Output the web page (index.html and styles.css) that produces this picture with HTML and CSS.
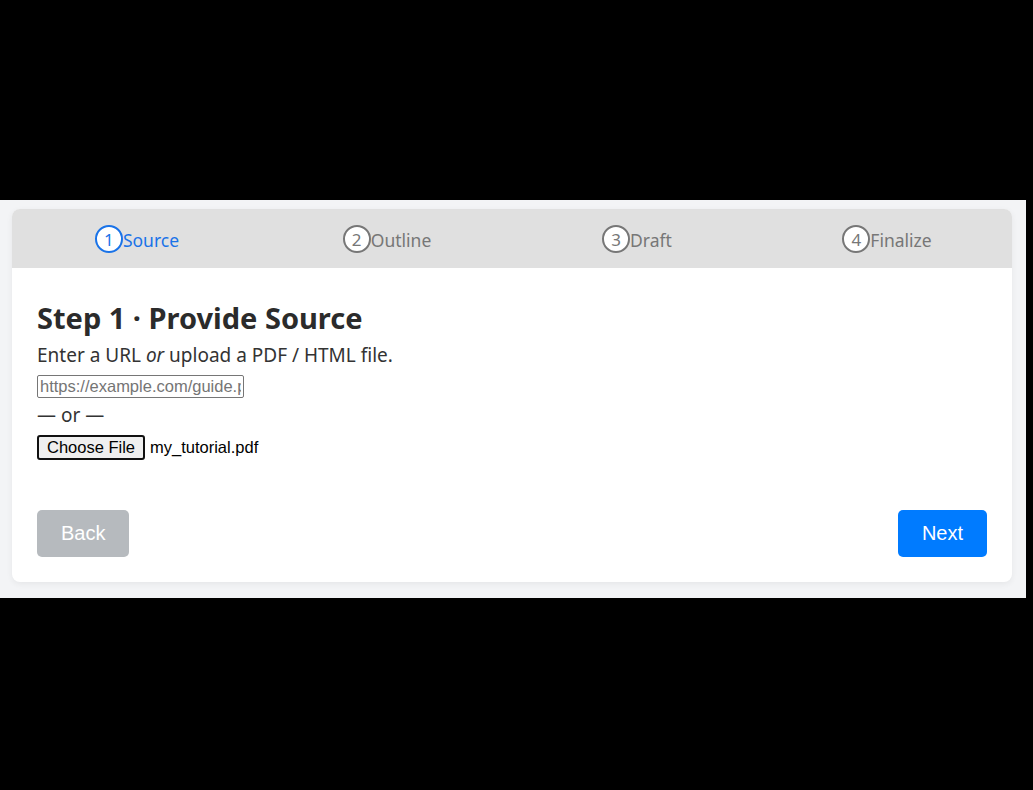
FILE: index.html
```html
<!DOCTYPE html>
<html lang="en">
<head>
<meta charset="utf-8">
<title>Wizard</title>
<link rel="stylesheet" href="styles.css">
</head>
<body>
<div class="page">
  <div class="card">
    <div class="steps">
      <div class="step active"><span class="num">1</span><span class="label">Source</span></div>
      <div class="step"><span class="num">2</span><span class="label">Outline</span></div>
      <div class="step"><span class="num">3</span><span class="label">Draft</span></div>
      <div class="step"><span class="num">4</span><span class="label">Finalize</span></div>
    </div>
    <div class="body">
      <h2 class="title">Step 1 · Provide Source</h2>
      <p class="lead">Enter a URL <em>or</em> upload a PDF / HTML file.</p>
      <input class="url" type="text" placeholder="https://example.com/guide.pdf">
      <div class="or">— or —</div>
      <div class="file-row"><button class="file-btn" type="button">Choose File</button><span class="file-name">my_tutorial.pdf</span></div>
      <div class="actions">
        <button class="btn btn-back" type="button">Back</button>
        <button class="btn btn-next" type="button">Next</button>
      </div>
    </div>
  </div>
</div>
</body>
</html>
```

FILE: styles.css
```css
html, body {
  margin: 0;
  padding: 0;
  background: #000;
}
body {
  height: 790px;
  overflow: hidden;
}
.page {
  margin-top: 200px;
  width: 1026px;
  box-sizing: border-box;
  padding: 9px 14px 16px 12px;
  background: #f3f4f6;
  font-family: "Noto Sans", "Open Sans", sans-serif;
  color: #333;
}
.card {
  background: #fff;
  border-radius: 8px;
  box-shadow: 0 2px 6px rgba(0,0,0,0.06);
  overflow: hidden;
}
.steps {
  display: flex;
  height: 59px;
  background: #e0e0e0;
  align-items: center;
}
.step {
  flex: 1;
  display: flex;
  justify-content: center;
  align-items: center;
  color: #777;
  font-size: 17.5px;
}
.step .num {
  width: 24px;
  height: 24px;
  border: 2px solid #777;
  border-radius: 50%;
  background: #fff;
  display: flex;
  align-items: center;
  justify-content: center;
  font-size: 17px;
  line-height: 1;
  margin-top: 1px;
}
.step .label {
  line-height: 24px;
  margin-top: 3px;
}
.step.active {
  color: #1a73e8;
}
.step.active .num {
  border-color: #1a73e8;
}
.body {
  padding: 25px;
}
.title {
  margin: 6px 0 0;
  font-size: 29px;
  font-weight: 700;
  line-height: 38px;
  color: #2b2b2b;
}
.lead {
  margin: 4px 0 6px;
  font-size: 19px;
  line-height: 28px;
}
.url {
  display: block;
  box-sizing: border-box;
  width: 207px;
  height: 23px;
  padding: 1px 2px;
  border: 1px solid #767676;
  border-radius: 2px;
  font-family: "Liberation Sans", Arial, sans-serif;
  font-size: 16.5px;
  color: #000;
}
.url::placeholder {
  color: #757575;
}
.or {
  margin-top: 6px;
  font-size: 19px;
  line-height: 22px;
}
.file-row {
  margin-top: 9px;
  display: flex;
  align-items: center;
  font-family: "Liberation Sans", Arial, sans-serif;
  font-size: 16.5px;
  color: #000;
}
.file-btn {
  box-sizing: border-box;
  height: 25px;
  width: 108px;
  padding: 0;
  border: 2px solid #111;
  border-radius: 3px;
  background: #efefef;
  font-family: "Liberation Sans", Arial, sans-serif;
  font-size: 16.5px;
  color: #000;
}
.file-name {
  margin-left: 5px;
}
.actions {
  margin-top: 50px;
  display: flex;
  justify-content: space-between;
}
.btn {
  border: none;
  border-radius: 5px;
  padding: 12px 24px;
  font-family: "Liberation Sans", Arial, sans-serif;
  font-size: 20px;
  line-height: 23px;
  color: #fff;
}
.btn-back {
  background: #b6babe;
}
.btn-next {
  background: #007bff;
}
```
